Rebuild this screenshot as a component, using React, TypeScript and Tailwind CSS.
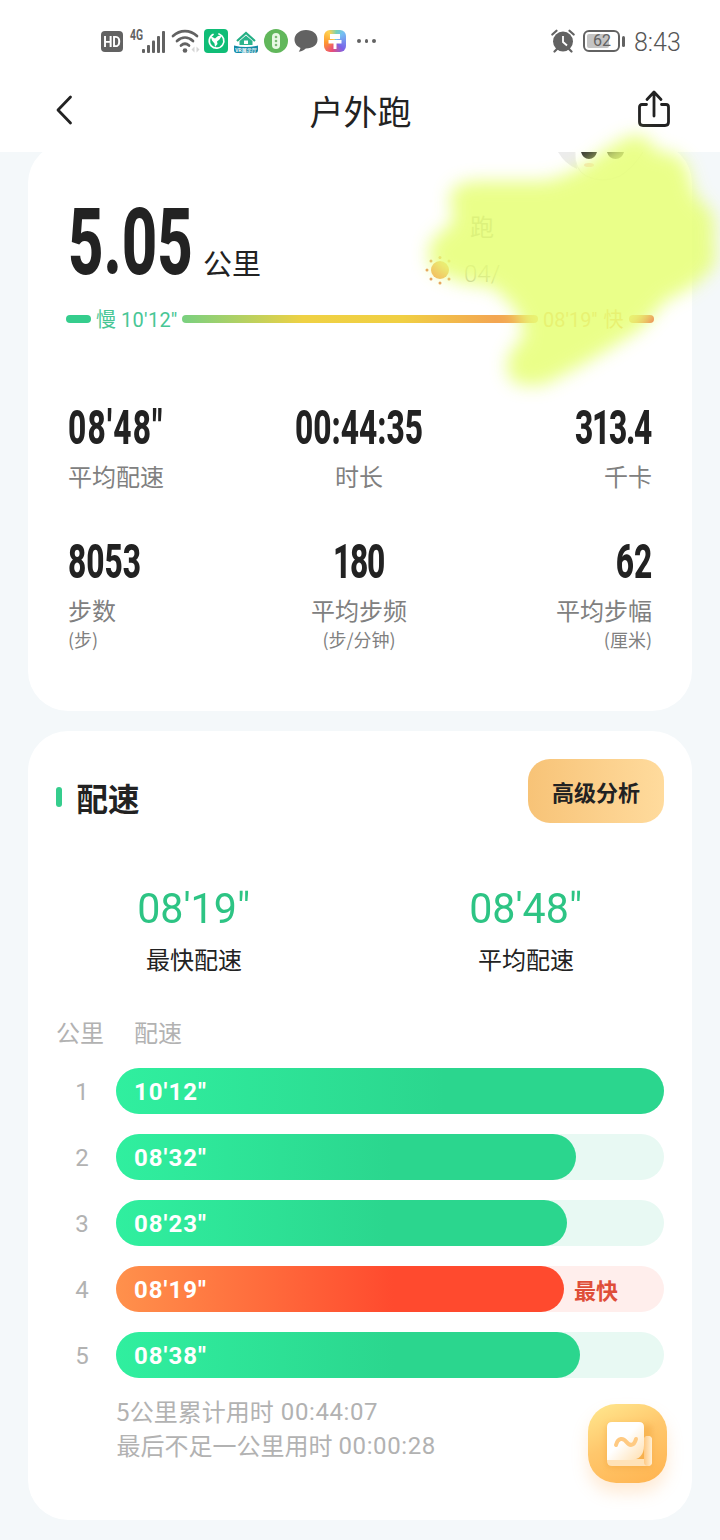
import React from "react";

const CJK = "font-['Noto_Sans_CJK_SC',sans-serif]";
const NUM = "font-['Roboto',sans-serif]";

type Stat = { value: string; label: string; unit?: string; tracking?: string };

const statRows: Stat[][] = [
  [
    { value: "08'48\"", label: "平均配速", tracking: "tracking-[1.9px]" },
    { value: "00:44:35", label: "时长" },
    { value: "313.4", label: "千卡", tracking: "tracking-[-2px] mr-[1px]" },
  ],
  [
    { value: "8053", label: "步数", unit: "(步)" },
    { value: "180", label: "平均步频", unit: "(步/分钟)", tracking: "tracking-[-2px]" },
    { value: "62", label: "平均步幅", unit: "(厘米)" },
  ],
];

const splits = [
  { km: 1, pace: "10'12''", width: 548 },
  { km: 2, pace: "08'32''", width: 460 },
  { km: 3, pace: "08'23''", width: 451 },
  { km: 4, pace: "08'19''", width: 448, fastest: true },
  { km: 5, pace: "08'38''", width: 464 },
];

const alignments = [
  { box: "items-start", origin: "origin-left" },
  { box: "items-center -translate-x-px", origin: "origin-center" },
  { box: "items-end", origin: "origin-right" },
];

function StatusBar() {
  return (
    <div className="flex h-[82px] items-center pl-[101px] pr-[40px] text-[#626262]">
      <div className={`${NUM} mt-[1px] flex h-[21px] w-[22px] items-center justify-center rounded-[4px] bg-[#626262] text-[13px] font-bold leading-none text-white`}>
        <span className="scale-y-[1.15]">HD</span>
      </div>
      <svg className="ml-[6px]" width="38" height="26" viewBox="0 0 38 26" fill="currentColor">
        <text x="1" y="12" fontFamily="Roboto" fontWeight="700" fontSize="14" textLength="13" lengthAdjust="spacingAndGlyphs">4G</text>
        <rect x="13" y="21" width="3" height="4" rx="1" />
        <rect x="18" y="17" width="3" height="8" rx="1" />
        <rect x="23" y="12.500" width="3" height="12.500" rx="1" />
        <rect x="28" y="8" width="3" height="17" rx="1" />
        <rect x="33" y="3" width="3" height="22" rx="1" />
      </svg>
      <svg className="ml-[4px]" width="30" height="26" viewBox="0 0 30 26" fill="none" stroke="currentColor" strokeWidth="2.700" strokeLinecap="round">
        <path d="M2 8C9 1.500 19 1.500 26 8" />
        <path d="M6 13C11 8.500 17 8.500 22 13" />
        <path d="M10 17.500C12.500 15.300 15.500 15.300 18 17.500" />
        <circle cx="14" cy="22.500" r="2.300" fill="currentColor" stroke="none" />
        <path d="M23.500 18.500v6l-3-3zM25.500 18.500v6l3-3z" fill="#d5d5d5" stroke="none" />
      </svg>
      <svg className="ml-[3px]" width="24" height="24" viewBox="0 0 24 24">
        <rect width="24" height="24" rx="4" fill="#10bd77" />
        <path d="M9 5.500A7.300 7.300 0 1 0 15 5" fill="none" stroke="#fff" strokeWidth="1.700" strokeLinecap="round" />
        <path d="M6.500 7l4.500 2.500L14 7l4-.5-2.500 4-2.500 2 .5 2.500-2.500 3-.5-3.500-2.500-3z" fill="#fff" />
      </svg>
      <svg className="ml-[6px]" width="24" height="24" viewBox="0 0 24 24">
        <path d="M3 12L12 4l9 8" fill="none" stroke="#23af84" strokeWidth="2.200" />
        <path d="M5.500 12L12 6.500l6.500 5.500v4h-13z" fill="#2bb48c" />
        <path d="M10 11.500h4v3.500h-4z" fill="#fff" />
        <path d="M0 16.500q12 3 24 0v4.500q0 3-3 3H3q-3 0-3-3z" fill="#148ba7" />
        <text x="12" y="23" textAnchor="middle" fontFamily="Noto Sans CJK SC" fontWeight="700" fontSize="5" fill="#fff">VR展示厅</text>
      </svg>
      <svg className="ml-[6px]" width="24" height="24" viewBox="0 0 24 24">
        <circle cx="12" cy="12" r="12" fill="#61b75b" />
        <rect x="8" y="4" width="8" height="16" rx="4" fill="#e8f8e4" />
        <g fill="#7ab973"><circle cx="12" cy="8" r="1.300" /><circle cx="12" cy="12" r="1.300" /><circle cx="12" cy="16" r="1.300" /></g>
      </svg>
      <svg className="ml-[6px]" width="24" height="24" viewBox="0 0 24 24" fill="currentColor">
        <path d="M12 1C5 1 .5 5.500.5 10.500c0 4 2.500 7 6 8.500-.4 1.600-1 2.800-1.700 3.700 3.300-.3 5.500-1.700 7-3.200C19 19.500 23.500 16 23.500 10.500S19 1 12 1z" />
      </svg>
      <div className="ml-[6px] flex size-[22px] items-center justify-center rounded-[6px] bg-[conic-gradient(from_45deg,#74bff3,#7b63e8_25%,#e94d79_42%,#ff982f_60%,#ffd250_78%,#75d2b5_90%,#74bff3)]">
        <svg width="16" height="18" viewBox="0 0 16 18" fill="#fff">
          <path d="M3 2h10v5H3zM1.500 8h13v3.500H9.500V17h-3v-5.500h-5z" />
        </svg>
      </div>
      <div className="ml-[11px] flex gap-[4px]">
        <i className="size-[3.500px] rounded-full bg-current" />
        <i className="size-[3.500px] rounded-full bg-current" />
        <i className="size-[3.500px] rounded-full bg-current" />
      </div>
      <svg className="ml-auto" width="24" height="24" viewBox="0 0 24 24" fill="none" stroke="currentColor">
        <circle cx="12" cy="12.500" r="10" fill="currentColor" stroke="none" />
        <path d="M1.300 5.500L5.500 1.700M22.700 5.500L18.500 1.700M3.500 22.500l2.500-2.500M20.500 22.500L18 20" strokeWidth="2.200" strokeLinecap="round" />
        <path d="M12 7v6l4 3.500" stroke="#fff" strokeWidth="1.800" />
      </svg>
      <div className="ml-[8px] flex h-[22px] w-[37px] rounded-[6px] border-2 border-current p-[2px]">
        <div className={`${NUM} flex h-[14px] w-[22px] shrink-0 items-center justify-center whitespace-nowrap rounded-[2px] bg-[#c4c4c4] text-[16px] leading-none`}>
          <span className="translate-x-[4px]">62</span>
        </div>
      </div>
      <div className="ml-[2px] h-[11px] w-[3px] rounded-full bg-current" />
      <div className={`${NUM} ml-[9px] mt-[4px] w-[46px] whitespace-nowrap text-[25px] font-light leading-[28px] text-[#555]`}>8:43</div>
    </div>
  );
}

function NavBar() {
  return (
    <div className="flex h-[70px] items-start justify-between pl-[54px] pr-[49px] pt-[7px]">
      <svg className="mt-[6px]" width="30" height="30" viewBox="0 0 30 30" fill="none" stroke="#222" strokeWidth="2.800" strokeLinecap="round" strokeLinejoin="round">
        <path d="M16.500 2L4 15l12.500 13" />
      </svg>
      <h1 className={`${CJK} pt-[1.500px] text-[34px] leading-[40px] text-[#222]`}>户外跑</h1>
      <svg width="34" height="38" viewBox="0 0 34 38" fill="none" stroke="#222" strokeWidth="2.800" strokeLinecap="round" strokeLinejoin="round">
        <path d="M9.500 15.500H5q-2.500 0-2.500 2.500v15q0 3.500 3.500 3.500h22q3.500 0 3.500-3.500V18q0-2.500-2.500-2.500h-4.500M17 27V4M10 10.500L17 3l7 7.500" />
      </svg>
    </div>
  );
}

function Mascot() {
  return (
    <svg className="absolute left-[529px] top-[9px]" width="90" height="34" viewBox="0 0 90 34">
      <path d="M1 0h17l2 17Q8 12 1 0z" fill="#ececec" />
      <path d="M18 0q-1 17 11 24 17 8 34 0Q76 16 86 0" fill="#fff" stroke="#efefef" />
      <path d="M24 0h16q-2 7-8 7t-8-7z" fill="#333" />
      <path d="M50 0h17q-2 7-8.500 7T50 0z" fill="#444" />
      <ellipse cx="32" cy="13" rx="5" ry="2" fill="#fbd8d1" />
    </svg>
  );
}

function Weather() {
  return (
    <div className="absolute left-[397px] top-[68px] flex flex-col">
      <span className={`${CJK} ml-[45px] text-[24px] leading-[30px] text-[#999]`}>跑</span>
      <div className="mt-[12px] flex items-center gap-[11px]">
        <svg width="28" height="30" viewBox="0 0 28 30" fill="#e59a5b">
          <circle cx="15" cy="14" r="9" fill="#f5b45f" />
          <circle cx="2" cy="14" r="1.500" /><circle cx="6" cy="5" r="1.500" /><circle cx="15" cy="1.500" r="1.500" />
          <circle cx="24" cy="5" r="1.500" /><circle cx="24" cy="23" r="1.500" /><circle cx="15" cy="27" r="1.500" /><circle cx="6" cy="23" r="1.500" />
        </svg>
        <span className={`${NUM} pt-[6px] text-[24px] font-light leading-[30px] text-[#b5b5b5]`}>04/</span>
      </div>
    </div>
  );
}

function Highlighter() {
  return (
    <svg className="pointer-events-none absolute left-[400px] top-[110px]" width="320" height="310" viewBox="400 110 320 310">
      <defs>
        <filter id="soft" x="-20%" y="-20%" width="140%" height="140%"><feGaussianBlur stdDeviation="8.500" /></filter>
      </defs>
      <path
        filter="url(#soft)"
        fill="#e7ff78"
        opacity=".87"
        d="M450 204Q447 181 480 181L545 181Q578 174 600 153L625 138Q645 128 656 151Q688 151 691 182Q693 195 705 205Q718 215 714 236L716 262Q704 284 666 300L642 328Q608 350 580 366L546 384Q512 391 507 371Q505 352 525 336L518 314Q508 298 490 286Q460 286 434 270Q421 250 439 233Q460 222 450 204Z"
      />
    </svg>
  );
}

function Summary() {
  return (
    <section className="relative -mt-[9px] h-[568px] rounded-[40px] bg-white px-[40px] pt-[58px]">
      <Mascot />
      <div className="flex h-[80px] items-start text-[#222]">
        <div className={`${NUM} w-[135px] whitespace-nowrap pt-[2px] text-[92px] font-extrabold leading-[80px]`}>
          <span className="inline-block origin-left scale-x-[0.67]">5.05</span>
        </div>
        <span className={`${CJK} mt-[41px] text-[29px] leading-[40px]`}>公里</span>
      </div>
      <Weather />
      <div className="-mx-[2px] mt-[26px] flex h-[24px] items-center">
        <i className="h-[8px] w-[25px] rounded-full bg-[#35cd8d]" />
        <div className="ml-[5px] flex w-[86px] items-center whitespace-nowrap text-[20px] leading-[24px] text-[#48c695]">
          <span className={CJK}>慢</span>
          <span className={`${NUM} ml-[5px] pt-[2px] text-[20px] tracking-[0.3px]`}>10'12''</span>
        </div>
        <i className="h-[8px] w-[356px] rounded-full bg-[linear-gradient(90deg,#79d080,#efd144_34%,#f0cf43_62%,#f3a652_88%,#f3a652)]" />
        <div className="ml-[5px] flex w-[86px] items-center whitespace-nowrap text-[20px] leading-[24px] text-[#ee9a4a]">
          <span className={`${NUM} mr-[6px] pt-[2px] text-[20px]`}>08'19''</span>
          <span className={CJK}>快</span>
        </div>
        <i className="h-[8px] w-[25px] rounded-full bg-[linear-gradient(90deg,#f3a652,#ee7552)]" />
      </div>
      <div className="mt-[72px] flex flex-col gap-[46px]">
        {statRows.map((row, r) => (
          <div key={r} className="grid grid-cols-3">
            {row.map((s, i) => (
              <div key={s.label} className={`flex flex-col whitespace-nowrap ${alignments[i].box}`}>
                <span className={`${NUM} ${alignments[i].origin} ${s.tracking ?? ""} scale-x-[0.66] pt-[1px] text-[48px] font-extrabold leading-[48px] text-[#222]`}>{s.value}</span>
                <span className={`${CJK} mt-[9px] text-[24px] leading-[30px] text-[#808080]`}>{s.label}</span>
                {s.unit && <span className={`${CJK} mt-[2px] text-[18px] leading-[24px] text-[#808080]`}>{s.unit}</span>}
              </div>
            ))}
          </div>
        ))}
      </div>
    </section>
  );
}

function PaceCard() {
  return (
    <section className="mt-[20px] h-[789px] rounded-[40px] bg-white px-[28px] pt-[28px]">
      <div className="flex h-[64px] items-start">
        <i className="mt-[28px] h-[20px] w-[6px] rounded-full bg-[#35cd8d]" />
        <h2 className={`${CJK} ml-[14.500px] mt-[18px] text-[31.500px] font-bold leading-[40px] text-[#222]`}>配速</h2>
        <button className={`${CJK} ml-auto h-[64px] w-[136px] rounded-[22px] bg-gradient-to-r from-[#f7c377] to-[#ffdb9d] text-[22px] font-bold leading-[64px] text-[#222]`}>
          高级分析
        </button>
      </div>
      <div className="-mx-[28px] mt-[61px] grid grid-cols-2 text-center">
        {[["08'19\"", "最快配速"], ["08'48\"", "平均配速"]].map(([value, label]) => (
          <div key={label} className="flex flex-col items-center">
            <span className={`${NUM} origin-center scale-x-[0.98] text-[42px] leading-[50px] text-[#2dc484]`}>{value}</span>
            <span className={`${CJK} mt-[10px] text-[24px] leading-[30px] text-[#222]`}>{label}</span>
          </div>
        ))}
      </div>
      <div className={`${CJK} mt-[43px] flex gap-[30px] text-[24px] leading-[30px] text-[#b2b2b2]`}>
        <span>公里</span>
        <span>配速</span>
      </div>
      <div className="mt-[21px] flex flex-col gap-[20px]">
        {splits.map((s) => (
          <div key={s.km} className="flex h-[46px] items-center">
            <span className={`${NUM} w-[52px] pt-[2px] text-center text-[24px] text-[#b2b2b2]`}>{s.km}</span>
            <div className={`ml-[8px] flex h-full w-[548px] items-center rounded-full ${s.fastest ? "bg-[#ffeeec]" : "bg-[#e8f9f3]"}`}>
              <div
                className={`${NUM} flex h-full items-center rounded-full pl-[18px] pt-px text-[24px] font-bold tracking-[1px] text-white ${
                  s.fastest ? "bg-[linear-gradient(90deg,#ff914c,#ff4a2e_62%)]" : "bg-[linear-gradient(90deg,#30ef9f,#2bd68e_60%)]"
                }`}
                style={{ width: s.width }}
              >
                {s.pace}
              </div>
              {s.fastest && <span className={`${CJK} ml-[10px] text-[22px] font-bold leading-[46px] text-[#df4e39]`}>最快</span>}
            </div>
          </div>
        ))}
      </div>
      <div className="mt-[16px] pl-[60.500px] text-[24px] leading-[34px] text-[#b2b2b2]">
        <p className={`${CJK} flex h-[34px] items-center gap-[7px]`}>
          <span>5公里累计用时</span>
          <span className={`${NUM} pt-[2px] tracking-[0.6px]`}>00:44:07</span>
        </p>
        <p className={`${CJK} flex h-[34px] items-center gap-[6px]`}>
          <span>最后不足一公里用时</span>
          <span className={`${NUM} pt-[2px] tracking-[0.6px]`}>00:00:28</span>
        </p>
      </div>
    </section>
  );
}

function ReportButton() {
  return (
    <button className="absolute left-[588px] top-[1404px] size-[79px] rounded-[28px] bg-[linear-gradient(155deg,#ffe990,#ffc76c_45%,#ffb34f)] shadow-[0_10px_16px_rgba(255,177,91,0.25)]">
      <svg width="79" height="79" viewBox="0 0 79 79">
        <defs>
          <linearGradient id="page" x1="0" y1="0" x2="1" y2="1"><stop offset=".45" stopColor="#fff" /><stop offset="1" stopColor="#ffdfaf" /></linearGradient>
          <linearGradient id="roll" x1="0" y1="0" x2="1" y2="0"><stop stopColor="#ffc983" /><stop offset="1" stopColor="#fff0d6" /></linearGradient>
          <filter id="glow" x="-30%" y="-30%" width="160%" height="160%"><feGaussianBlur stdDeviation="3" /></filter>
        </defs>
        <rect x="18" y="20" width="46" height="44" rx="5" fill="#ed9b31" opacity=".4" filter="url(#glow)" />
        <path d="M19 55h37V36q0-4 4-4t4 4v22q0 4-5 4H24q-5 0-5-5z" fill="#ffe2b8" />
        <path d="M56 36q0-4 4-4t4 4v22q0 4-4 4t-4-4z" fill="url(#roll)" />
        <path d="M24 18h27q5 0 5 5v18q0 15-14 15H19V23q0-5 5-5z" fill="url(#page)" />
        <path d="M28 41c2-8 7.500-7 10.500-3s7.500 4.500 9.500-3" fill="none" stroke="#ffca82" strokeWidth="4" strokeLinecap="round" />
      </svg>
    </button>
  );
}

export default function App() {
  return (
    <div className="relative h-[1540px] w-[720px] overflow-hidden bg-white">
      <StatusBar />
      <NavBar />
      <main className="h-[1388px] overflow-hidden bg-[#f4f8fa] px-[28px]">
        <Summary />
        <PaceCard />
      </main>
      <ReportButton />
      <Highlighter />
    </div>
  );
}
